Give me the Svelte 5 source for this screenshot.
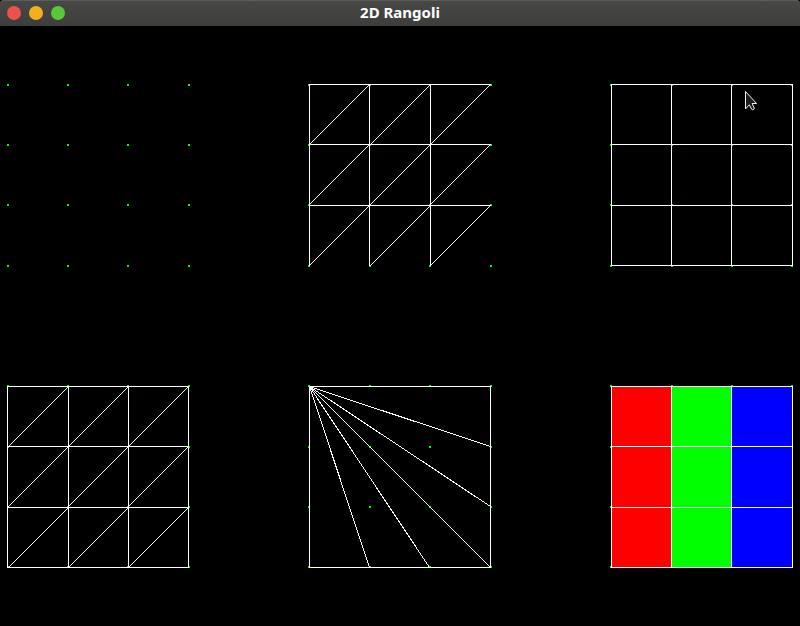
<script>
  const dotRows = { top: [58, 118, 178, 239], bottom: [359, 420, 480, 540] };
  const dotCols = [
    [7, 67, 127, 188],
    [308, 369, 429, 490],
    [610, 671, 731, 791]
  ];
  const dots = Object.values(dotRows).flatMap((rows) =>
    dotCols.flatMap((cols) => rows.flatMap((y) => cols.map((x) => ({ x, y }))))
  );

  const bands = [
    { x: 611, width: 60, fill: '#ff0000' },
    { x: 671, width: 60, fill: '#00ff00' },
    { x: 731, width: 61, fill: '#0000ff' }
  ];

  const top = [58, 118, 179, 239];
  const bottom = [360, 420, 481, 541];

  function grid(xs, ys) {
    const across = ys.map((y) => [xs[0], y, xs[3], y]);
    const down = xs.map((x) => [x, ys[0], x, ys[3]]);
    return [...across, ...down];
  }

  // Cells can be a pixel off square; keep every diagonal at 45 degrees so it steps evenly.
  function diagonals(xs, ys) {
    return [0, 1, 2].flatMap((r) =>
      [0, 1, 2].map((c) => {
        const length = Math.min(xs[c + 1] - xs[c], ys[r + 1] - ys[r]);
        return [xs[c + 1] - length, ys[r] + length, xs[c + 1], ys[r]];
      })
    );
  }

  const strip = [309, 369, 430, 490];
  const triangles = [7, 68, 128, 188];
  const squares = [611, 671, 731, 792];
  const fanEnds = [[490, 420], [490, 480], [490, 541], [429, 541], [369, 541]];

  const lines = [
    ...top.slice(0, 3).map((y) => [309, y, 490, y]),
    ...strip.slice(0, 3).map((x) => [x, top[0], x, top[3]]),
    ...diagonals(strip, top),
    ...grid(squares, top),
    ...grid(triangles, bottom),
    ...diagonals(triangles, bottom),
    [309, 360, 490, 360], [309, 541, 490, 541],
    [309, 360, 309, 541], [490, 360, 490, 541],
    ...fanEnds.map(([x, y]) => [309, 360, x, y]),
    ...grid(squares, bottom)
  ];
</script>

<div class="window">
  <header>
    <div class="controls">
      <button class="close" aria-label="Close"></button>
      <button class="minimize" aria-label="Minimize"></button>
      <button class="maximize" aria-label="Maximize"></button>
    </div>
    <h1>2D Rangoli</h1>
  </header>
  <main>
    <svg viewBox="0 0 800 600" role="img" aria-label="Point, line, triangle and filled square patterns">
      <g shape-rendering="crispEdges">
        {#each dots as dot}
          <rect x={dot.x} y={dot.y} width="2" height="2" fill="#00ff00" />
        {/each}
        {#each bands as band}
          <rect x={band.x} y="360" width={band.width} height="181" fill={band.fill} />
        {/each}
        <g transform="translate(0.5 0.5)" stroke="#ffffff" stroke-width="1" stroke-linecap="square">
          {#each lines as [x1, y1, x2, y2]}
            <line {x1} {y1} {x2} {y2} />
          {/each}
        </g>
      </g>
      <path
        d="M745.5 65.5V83L749.3 78.8L751.7 83.3Q752.7 84.3 753.8 83.2L754.3 82.1L752.1 77.5H756.6Z"
        fill="#1c1c1c" stroke="#f4f4f4" stroke-width="1" stroke-linejoin="round"
      />
    </svg>
  </main>
</div>

<style>
  :global(body) {
    margin: 0;
    background: #000;
  }
  .window {
    background: #000;
  }
  header {
    box-sizing: border-box;
    display: grid;
    grid-template-columns: 1fr auto 1fr;
    align-items: center;
    height: 26px;
    padding: 0 7px;
    border-radius: 4px 4px 0 0;
    background: linear-gradient(#484847, #3d3d3c);
    box-shadow: inset 0 1px #5d5d5c;
  }
  .controls {
    display: flex;
    gap: 8px;
  }
  button {
    width: 14px;
    height: 14px;
    padding: 0;
    border: 0;
    border-radius: 50%;
  }
  .close {
    background: #ea524a;
  }
  .minimize {
    background: #f3af1d;
  }
  .maximize {
    background: #59c837;
  }
  h1 {
    margin: 0;
    padding-bottom: 2px;
    color: #fff;
    font: bold 15px/24px "Noto Sans", sans-serif;
  }
  svg {
    display: block;
    width: 100%;
    height: auto;
  }
</style>
